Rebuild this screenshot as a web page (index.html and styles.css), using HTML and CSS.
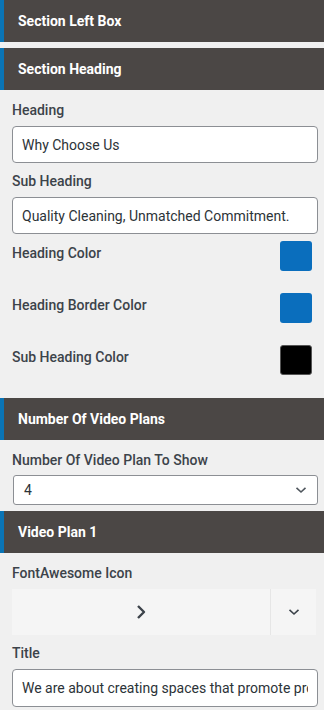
FILE: index.html
```html
<!DOCTYPE html>
<html>
<head>
<meta charset="utf-8">
<link rel="stylesheet" href="styles.css">
</head>
<body>
<div class="panel">
  <div class="sec-head first">Section Left Box</div>
  <div class="sec-head">Section Heading</div>
  <div class="sec-body">
    <div class="field">
      <label class="lbl">Heading</label>
      <input class="txt" type="text" value="Why Choose Us">
    </div>
    <div class="field">
      <label class="lbl">Sub Heading</label>
      <input class="txt" type="text" value="Quality Cleaning, Unmatched Commitment.">
    </div>
    <div class="color-row">
      <span class="lbl">Heading Color</span>
      <span class="swatch blue"></span>
    </div>
    <div class="color-row">
      <span class="lbl">Heading Border Color</span>
      <span class="swatch blue"></span>
    </div>
    <div class="color-row">
      <span class="lbl">Sub Heading Color</span>
      <span class="swatch black"></span>
    </div>
  </div>
  <div class="sec-head">Number Of Video Plans</div>
  <div class="sec-body tight">
    <div class="field">
      <label class="lbl">Number Of Video Plan To Show</label>
      <div class="select">
        <span>4</span>
        <svg width="12" height="8" viewBox="0 0 12 8"><path d="M1.5 1.8 L6 6 L10.5 1.8" fill="none" stroke="#50575e" stroke-width="1.6"/></svg>
      </div>
    </div>
  </div>
  <div class="sec-head">Video Plan 1</div>
  <div class="sec-body">
    <div class="field">
      <label class="lbl">FontAwesome Icon</label>
      <div class="icon-picker">
        <div class="ip-main">
          <svg width="10" height="16" viewBox="0 0 10 16"><path d="M2 2 L8 8 L2 14" fill="none" stroke="#3c434a" stroke-width="2.4" stroke-linejoin="round"/></svg>
        </div>
        <div class="ip-drop">
          <svg width="12" height="8" viewBox="0 0 12 8"><path d="M1.5 1.8 L6 6 L10.5 1.8" fill="none" stroke="#3c434a" stroke-width="1.6"/></svg>
        </div>
      </div>
    </div>
    <div class="field">
      <label class="lbl">Title</label>
      <input class="txt title" type="text" value="We are about creating spaces that promote productivity and well-being.">
    </div>
  </div>
</div>
</body>
</html>
```
FILE: styles.css
```css
* { box-sizing: border-box; }
html, body {
  margin: 0;
  padding: 0;
  background: #f0f0f0;
  font-family: Roboto, "Liberation Sans", Arial, sans-serif;
}
.panel {
  width: 324px;
  display: flex;
  flex-direction: column;
}
.sec-head {
  height: 42px;
  background: #4b4745;
  color: #fff;
  font-weight: 700;
  font-size: 14px;
  line-height: 42px;
  border-left: 4px solid #0a74b5;
  padding-left: 14px;
}
.sec-head.first {
  margin-bottom: 6px;
}
.sec-body {
  padding: 10px 6px 23px 12px;
  display: flex;
  flex-direction: column;
}
.sec-body.tight {
  padding-bottom: 6px;
}
.field {
  display: flex;
  flex-direction: column;
  margin-bottom: 8px;
}
.lbl {
  font-size: 14px;
  font-weight: 500;
  color: #3c434a;
  line-height: 20px;
  margin-bottom: 6px;
}
.txt {
  height: 37px;
  width: 306px;
  border: 1px solid #8c8f94;
  border-radius: 4px;
  background: #fff;
  font-family: Roboto, "Liberation Sans", Arial, sans-serif;
  font-size: 14px;
  color: #2c3338;
  padding: 0 9px;
  outline: none;
}
.txt.title {
  height: 38px;
}
.color-row {
  display: flex;
  justify-content: space-between;
  align-items: flex-start;
  height: 30px;
  margin-bottom: 22px;
  padding-right: 6px;
}
.field + .color-row {
  margin-top: -1px;
}
.color-row:last-child {
  margin-bottom: 0;
}
.color-row .lbl {
  line-height: 24px;
  margin: 0;
}
.swatch {
  width: 32px;
  height: 30px;
  border-radius: 3px;
  display: block;
}
.swatch.blue { background: #0a6ebd; }
.swatch.black { background: #000; border: 1px solid #555; }
.sec-body.tight .field { margin-bottom: 0; }
.sec-body.tight .lbl { margin-bottom: 5px; }
.select {
  height: 30px;
  width: 305px;
  margin-left: 1px;
  border: 1px solid #8c8f94;
  border-radius: 3px;
  background: #fff;
  display: flex;
  align-items: center;
  justify-content: space-between;
  padding: 0 10px;
  font-size: 14px;
  color: #2c3338;
}
.icon-picker {
  width: 304px;
  height: 46px;
  display: flex;
  background: #f5f5f5;
}
.ip-main {
  flex: 1;
  display: flex;
  align-items: center;
  justify-content: center;
}
.ip-drop {
  width: 46px;
  border-left: 1px solid #e6e6e6;
  display: flex;
  align-items: center;
  justify-content: center;
}
```
